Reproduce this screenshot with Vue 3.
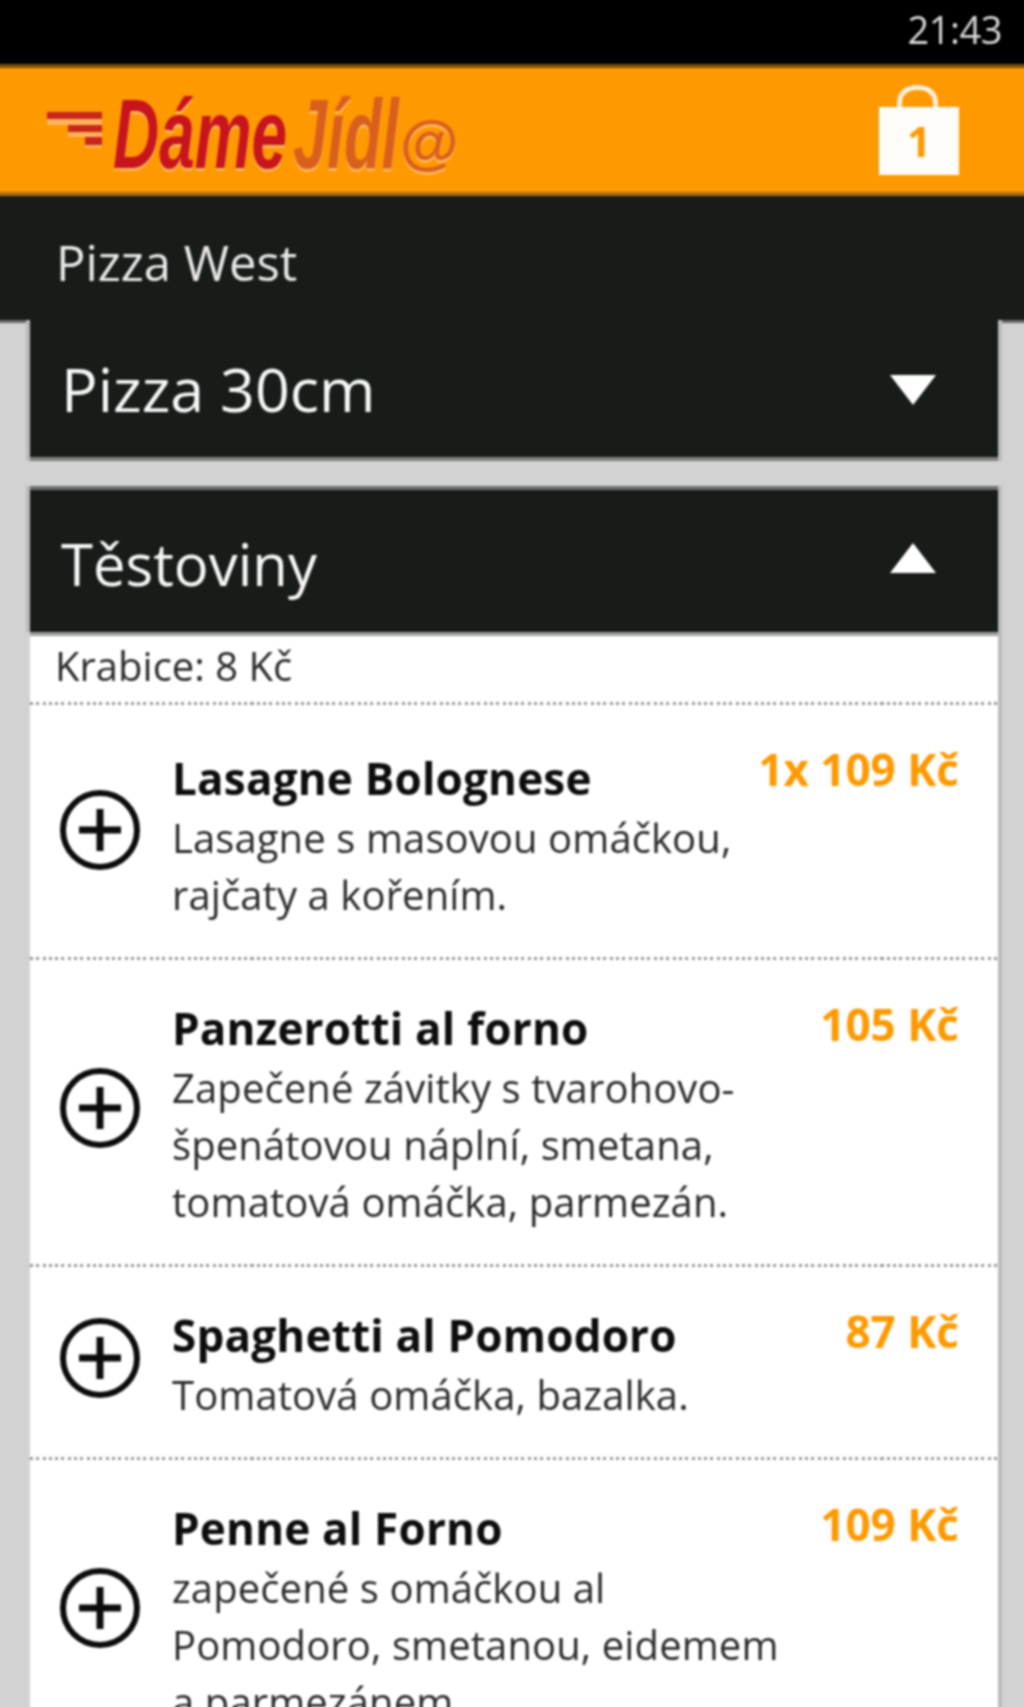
<template>
  <div class="screen">
    <div class="page">
      <div class="status"><span class="time">21:43</span></div>

      <header class="brand">
        <div class="logo">
          <svg class="speed" width="66" height="84" viewBox="0 0 66 84">
            <rect x="0" y="24" width="55" height="7" fill="#c9261b" />
            <rect x="0" y="31" width="55" height="6" fill="#ffb45c" />
            <rect x="21" y="37" width="34" height="7" fill="#c9261b" />
            <rect x="21" y="44" width="34" height="5" fill="#ffb45c" />
            <rect x="38" y="49" width="17" height="8" fill="#c9261b" />
            <rect x="38" y="57" width="17" height="3" fill="#ffb45c" />
          </svg>
          <span class="logo-a">Dáme</span>
          <span class="logo-b">Jídl</span>
          <span class="logo-c">@</span>
        </div>
        <div class="bag">
          <svg width="84" height="94" viewBox="0 0 84 94">
            <path d="M22.5 26V20C22.5 10 30 4.5 40.5 4.5S58.5 10 58.5 20V26" fill="none" stroke="#ffeeda" stroke-width="5" />
            <rect x="2" y="24" width="80" height="68" fill="#fffdf9" />
          </svg>
          <span class="bag-count">1</span>
        </div>
      </header>

      <div class="restaurant">Pizza West</div>

      <main class="content">
        <section class="cat cat-closed">
          <span>Pizza 30cm</span>
          <i class="tri tri-down"></i>
        </section>

        <section class="cat cat-open">
          <span>Těstoviny</span>
          <i class="tri tri-up"></i>
        </section>

        <div class="list">
          <div class="box-fee">Krabice: 8 Kč</div>
          <article v-for="item in items" :key="item.name" class="row">
            <svg class="plus" width="82" height="82" viewBox="0 0 82 82">
              <circle cx="41" cy="41" r="37" fill="none" stroke="#0c0c0c" stroke-width="6" />
              <path d="M41 20v42M20 41h42" fill="none" stroke="#0c0c0c" stroke-width="7" />
            </svg>
            <div class="info">
              <h3>{{ item.name }}</h3>
              <p v-for="line in item.lines" :key="line">{{ line }}</p>
            </div>
            <div class="price">{{ item.price }}</div>
          </article>
        </div>
      </main>
    </div>
  </div>
</template>

<script setup>
const items = [
  {
    name: 'Lasagne Bolognese',
    price: '1x 109 Kč',
    lines: ['Lasagne s masovou omáčkou,', 'rajčaty a kořením.']
  },
  {
    name: 'Panzerotti al forno',
    price: '105 Kč',
    lines: ['Zapečené závitky s tvarohovo-', 'špenátovou náplní, smetana,', 'tomatová omáčka, parmezán.']
  },
  {
    name: 'Spaghetti al Pomodoro',
    price: '87 Kč',
    lines: ['Tomatová omáčka, bazalka.']
  },
  {
    name: 'Penne al Forno',
    price: '109 Kč',
    lines: ['zapečené s omáčkou al', 'Pomodoro, smetanou, eidemem', 'a parmezánem.']
  }
]
</script>

<style>
html, body {
  margin: 0;
  background: #d2d2d2;
}
</style>

<style scoped>
.screen {
  width: 1024px;
  height: 1707px;
  overflow: hidden;
}

/* wider than the screen so the soft edge of the blur stays out of view */
.page {
  width: 1040px;
  margin: -8px 0 0 -8px;
  background: #d2d2d2;
  font-family: "Open Sans", "Noto Sans", sans-serif;
  filter: blur(0.8px);
}

.status {
  height: 72px;
  background: #000;
  display: flex;
  justify-content: flex-end;
  align-items: center;
  padding: 8px 30px 6px 0;
  box-sizing: border-box;
}

.time {
  color: #d8d8d8;
  font-size: 38px;
  letter-spacing: -0.5px;
}

.brand {
  height: 124px;
  background: #ff9900;
  border-top: 4px solid #7a4e08;
  border-bottom: 4px solid #a86f10;
  display: flex;
  align-items: center;
  justify-content: space-between;
  padding: 0 71px 0 55px;
}

.logo {
  display: flex;
  align-items: baseline;
  height: 84px;
  line-height: 84px;
  font-family: "Liberation Sans", sans-serif;
  font-size: 98px;
  font-weight: 700;
  font-style: italic;
  white-space: nowrap;
}

.speed {
  align-self: flex-start;
  flex: none;
}

.logo-a,
.logo-b,
.logo-c {
  display: block;
  transform-origin: left center;
  filter: drop-shadow(0 3px 0 #ffb45c);
}

.logo-a {
  width: 180px;
  color: #c8141c;
  transform: translateY(4px) scaleX(0.652);
}

.logo-b {
  width: 106px;
  color: #d95f1c;
  transform: translateY(4px) scaleX(0.627);
}

.logo-c {
  color: #d95f1c;
  font-size: 60px;
  transform: translateY(-1px);
}

.bag {
  position: relative;
  width: 84px;
  height: 94px;
}

.bag-count {
  position: absolute;
  left: 0;
  right: 0;
  top: 30px;
  text-align: center;
  color: #ff9900;
  font-size: 42px;
  font-weight: 700;
  line-height: 56px;
}

.restaurant {
  height: 124px;
  background: #181c19;
  color: #e8e8e8;
  font-size: 49px;
  line-height: 132px;
  padding-left: 64px;
}

.content {
  padding: 0 34px 0 38px;
  background: linear-gradient(#6a6a6a, #6a6a6a) top / 100% 3px no-repeat;
}

.cat {
  background: #181c19;
  color: #f6f6f6;
  display: flex;
  justify-content: space-between;
  align-items: center;
  box-sizing: border-box;
  padding: 0 62px 0 31px;
  box-shadow: -4px 0 0 #bababa, 4px 0 0 #bababa;
}

.cat-closed {
  height: 141px;
  font-size: 61px;
  border-bottom: 4px solid #808080;
}

.cat-open {
  height: 146px;
  margin-top: 25px;
  font-size: 58px;
  border-top: 4px solid #6f6f6f;
  padding-top: 4px;
}

.tri {
  display: block;
  width: 0;
  height: 0;
  border-left: 23px solid transparent;
  border-right: 23px solid transparent;
}

.tri-down {
  border-top: 30px solid #fff;
  margin-top: 2px;
}

.tri-up {
  border-bottom: 30px solid #fff;
  margin-top: -10px;
}

.list {
  background: #fff;
  border-top: 4px solid #a0a0a0;
  box-shadow: 4px 0 0 #bababa;
}

.box-fee {
  height: 66px;
  line-height: 60px;
  padding-left: 25px;
  font-size: 40px;
  color: #2a2a2a;
}

.row {
  position: relative;
  display: flex;
  align-items: center;
  padding: 45px 36px 34px 30px;
  background: repeating-linear-gradient(to right, #999 0 3px, transparent 3px 6.3px) top left / 100% 3px no-repeat;
}

.row:first-of-type {
  padding-top: 50px;
}

.plus {
  flex: none;
  margin: -16px 31px 0 -1px;
}

.info {
  flex: 1;
}

.info h3 {
  margin: -2px 0 2px;
  font-size: 44px;
  font-weight: 700;
  line-height: 57px;
  letter-spacing: 0.2px;
  color: #0d0d0d;
}

.info p {
  margin: 0;
  font-size: 40px;
  line-height: 57px;
  letter-spacing: 0.1px;
  color: #2a2a2a;
}

.price {
  position: absolute;
  top: 39px;
  right: 39px;
  font-size: 44px;
  font-weight: 700;
  color: #ff9900;
  line-height: 57px;
}
</style>
